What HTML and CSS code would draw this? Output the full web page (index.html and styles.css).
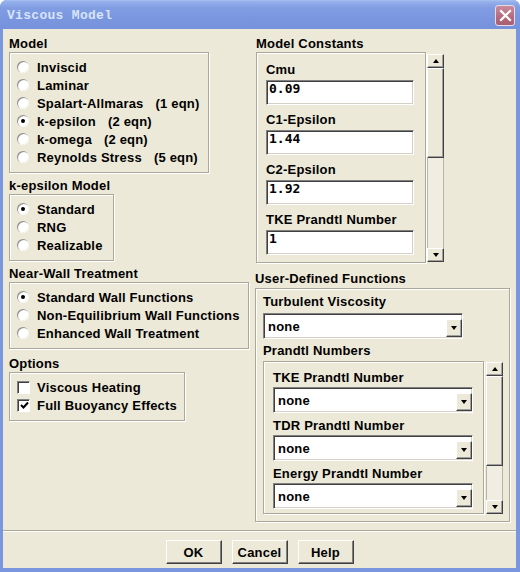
FILE: index.html
```html
<!DOCTYPE html>
<html lang="en">
<head>
  <meta charset="UTF-8" />
  <title>Viscous Model</title>
  <link rel="stylesheet" href="styles.css">
</head>
<body>
  <div class="window">
    <div class="titlebar">
      <span class="title">Viscous Model</span>
      <button class="close-btn" aria-label="Close">
        <svg width="13" height="13" viewBox="0 0 13 13"><path d="M2 2 L11 11 M11 2 L2 11" stroke="#fff" stroke-width="2.2" stroke-linecap="square"/></svg>
      </button>
    </div>

    <div class="client">
      <div class="panes">
        <!-- left column: model choices -->
        <div class="col col-left">
          <div class="group">
            <div class="group-label">Model</div>
            <div class="frame radio-frame w-model">
              <label class="opt"><span class="radio"></span>Inviscid</label>
              <label class="opt"><span class="radio"></span>Laminar</label>
              <label class="opt"><span class="radio"></span>Spalart-Allmaras<span class="eqn">(1 eqn)</span></label>
              <label class="opt"><span class="radio on"></span>k-epsilon<span class="eqn">(2 eqn)</span></label>
              <label class="opt"><span class="radio"></span>k-omega<span class="eqn">(2 eqn)</span></label>
              <label class="opt"><span class="radio"></span>Reynolds Stress<span class="eqn">(5 eqn)</span></label>
            </div>
          </div>

          <div class="group">
            <div class="group-label">k-epsilon Model</div>
            <div class="frame radio-frame w-keps">
              <label class="opt"><span class="radio on"></span>Standard</label>
              <label class="opt"><span class="radio"></span>RNG</label>
              <label class="opt"><span class="radio"></span>Realizable</label>
            </div>
          </div>

          <div class="group">
            <div class="group-label">Near-Wall Treatment</div>
            <div class="frame radio-frame w-wall">
              <label class="opt"><span class="radio on"></span>Standard Wall Functions</label>
              <label class="opt"><span class="radio"></span>Non-Equilibrium Wall Functions</label>
              <label class="opt"><span class="radio"></span>Enhanced Wall Treatment</label>
            </div>
          </div>

          <div class="group options">
            <div class="group-label">Options</div>
            <div class="frame radio-frame w-opts">
              <label class="opt"><span class="check"></span>Viscous Heating</label>
              <label class="opt"><span class="check">
                <svg width="9" height="9" viewBox="0 0 9 9"><path d="M1 4 L3.5 6.5 L8 1.5" fill="none" stroke="#000" stroke-width="2"/></svg>
              </span>Full Buoyancy Effects</label>
            </div>
          </div>
        </div>

        <!-- right column: constants and UDFs -->
        <div class="col col-right">
          <div class="group consts">
            <div class="group-label">Model Constants</div>
            <div class="scroll-row">
              <div class="frame const-frame">
                <div class="field"><div class="field-label">Cmu</div><div class="entry">0.09</div></div>
                <div class="field"><div class="field-label">C1-Epsilon</div><div class="entry">1.44</div></div>
                <div class="field"><div class="field-label">C2-Epsilon</div><div class="entry">1.92</div></div>
                <div class="field"><div class="field-label">TKE Prandtl Number</div><div class="entry">1</div></div>
              </div>
              <div class="scrollbar consts-bar">
                <span class="sb-btn up"></span>
                <span class="sb-thumb"></span>
                <span class="sb-track"></span>
                <span class="sb-btn down"></span>
              </div>
            </div>
          </div>

          <div class="group udf">
            <div class="group-label">User-Defined Functions</div>
            <div class="frame udf-frame">
              <div class="field-label">Turbulent Viscosity</div>
              <div class="combo first-combo"><span class="combo-text">none</span><span class="combo-btn"></span></div>

              <div class="field-label prandtl-label">Prandtl Numbers</div>
              <div class="scroll-row prandtl-row">
                <div class="frame prandtl-frame">
                  <div class="field"><div class="field-label">TKE Prandtl Number</div><div class="combo"><span class="combo-text">none</span><span class="combo-btn"></span></div></div>
                  <div class="field"><div class="field-label">TDR Prandtl Number</div><div class="combo"><span class="combo-text">none</span><span class="combo-btn"></span></div></div>
                  <div class="field"><div class="field-label">Energy Prandtl Number</div><div class="combo"><span class="combo-text">none</span><span class="combo-btn"></span></div></div>
                </div>
                <div class="scrollbar prandtl-bar">
                  <span class="sb-btn up"></span>
                  <span class="sb-thumb"></span>
                  <span class="sb-track"></span>
                  <span class="sb-btn down"></span>
                </div>
              </div>
            </div>
          </div>
        </div>
      </div>

      <div class="sep"></div>

      <div class="actions">
        <button class="btn">OK</button>
        <button class="btn">Cancel</button>
        <button class="btn">Help</button>
      </div>
    </div>
  </div>
</body>
</html>
```

FILE: styles.css
```css
:root {
  --face: #ece9d8;
  --etch: #aca899;
  --frame-blue: #7a96df;
  --title-text: #d8e4f8;
}
* { margin:0; padding:0; box-sizing:border-box; }
body {
  width:520px; height:572px; overflow:hidden; background:#fff;
  font: bold 13px "Liberation Sans", Arial, sans-serif; color:#000;
  letter-spacing:0.2px;
}

/* window chrome */
.window {
  width:520px; height:572px; display:flex; flex-direction:column;
  background: var(--frame-blue); border-radius:7px 7px 0 0; overflow:hidden;
}
.titlebar {
  height:29px; flex:none; display:flex; align-items:center; justify-content:space-between;
  padding:0 5px 0 7px;
  background: linear-gradient(#a9c1f0 0, #92aeea 2px, #819de2 8px, #7a96df 18px, #7592dc 100%);
}
.title { font: bold 13px "Liberation Mono", monospace; color: var(--title-text); letter-spacing:0.3px; margin-top:2px; }
.close-btn {
  width:20px; height:21px; margin-top:2px; border-radius:3px;
  border:1px solid #e8dbe6; background: linear-gradient(#c98c9c, #b46a7d 60%, #a95f72);
  display:flex; align-items:center; justify-content:center;
}

.client {
  flex:1; margin:0 4px 4px 3px; background: var(--face);
  display:flex; flex-direction:column;
}
.panes { display:flex; padding:7px 6px 0 6px; }
.col-left { width:246px; flex:none; }
.col-right { flex:1; }

.group + .group { margin-top:5px; }
.group-label, .field-label { height:16px; line-height:16px; white-space:nowrap; }

/* etched group frame */
.frame {
  border:1px solid var(--etch);
  box-shadow: inset 1px 1px 0 #fff, 1px 1px 0 #fff;
}
.radio-frame { padding:5px 0 6px 7px; }
.w-model { width:200px; }
.w-keps { width:105px; }
.w-wall { width:240px; }
.w-opts { width:176px; }
.group.options { margin-top:7px; }

.opt { display:flex; align-items:center; height:18px; white-space:nowrap; }
.eqn { margin-left:12px; }
.radio {
  width:12px; height:12px; border-radius:50%; margin-right:8px; flex:none; position:relative;
  background: radial-gradient(circle at 60% 60%, #fff 45%, #f1efe6 100%);
  box-shadow: inset 1px 1px 0 #8e8e8e, inset -1px -1px 0 #f7f6f0;
}
.radio.on::after {
  content:''; position:absolute; left:4px; top:4px; width:4px; height:4px;
  border-radius:50%; background:#000;
}
.check {
  width:13px; height:13px; margin-right:7px; flex:none; background:#fff;
  border:1px solid; border-color:#808080 #fff #fff #808080;
  box-shadow: inset 1px 1px 0 #404040;
  display:flex; align-items:center; justify-content:center;
}
.check svg { margin:1px 0 0 1px; }

/* right column */
.consts { margin-left:1px; }
.scroll-row { display:flex; align-items:flex-start; }
.const-frame { width:170px; height:211px; padding:9px 0 0 9px; overflow:hidden; }
.field-label + .entry { margin-top:2px; }
.entry {
  width:148px; height:25px; margin-bottom:7px; background:#fff;
  border:1px solid; border-color:#808080 #fff #fff #808080;
  box-shadow: inset 1px 1px 0 #404040, inset -1px -1px 0 #d4d0c8;
  padding:0 0 0 2px; line-height:22px; letter-spacing:0;
  font: bold 13px "DejaVu Sans Mono", monospace;
}

/* scrollbars */
.scrollbar {
  width:17px; display:flex; flex-direction:column; flex:none;
  border-left:1px solid #b8b5a6; border-right:1px solid #b8b5a6; background:#f0eee3;
}
.consts-bar { margin:2px 0 0 1px; height:208px; }
.prandtl-bar { margin:1px 0 0 2px; height:152px; }
.sb-btn, .sb-thumb {
  flex:none; background: var(--face);
  border:1px solid; border-color:#fff #404040 #404040 #fff;
  box-shadow: inset -1px -1px 0 #a0a0a0;
  display:flex; align-items:center; justify-content:center;
  margin:0 -1px;
}
.sb-btn { height:14px; }
.sb-btn::after { content:''; border-left:3.5px solid transparent; border-right:3.5px solid transparent; }
.sb-btn.up::after { border-bottom:4px solid #000; }
.sb-btn.down::after { border-top:4px solid #000; }
.sb-thumb { height:90px; }
.sb-track { flex:1; }

.group.udf { margin-top:8px; }
.udf-frame { margin-top:1px; padding:5px 0 7px 7px; }
.combo {
  width:200px; height:26px; background:#fff; display:flex; align-items:center;
  border:1px solid; border-color:#808080 #fff #fff #808080;
  box-shadow: inset 1px 1px 0 #404040, inset -1px -1px 0 #d4d0c8;
}
.first-combo { margin-top:3px; }
.combo-text { flex:1; padding-left:4px; padding-top:1px; }
.combo-btn {
  width:16px; height:18px; align-self:flex-end; margin:0 0 1px 0; background: var(--face);
  border:1px solid; border-color:#fff #404040 #404040 #fff;
  box-shadow: inset -1px -1px 0 #a0a0a0;
  display:flex; align-items:center; justify-content:center;
}
.combo-btn::after {
  content:''; border-left:3.5px solid transparent; border-right:3.5px solid transparent;
  border-top:4px solid #000;
}
.prandtl-label { margin-top:4px; }
.prandtl-row { margin-top:2px; }
.prandtl-frame { width:221px; height:153px; padding:8px 0 0 9px; overflow:hidden; }
.prandtl-frame .field-label + .combo { margin-top:1px; }
.prandtl-frame .combo { margin-bottom:5px; }

/* dialog buttons */
.sep { height:2px; margin-top:8px; border-top:1px solid var(--etch); border-bottom:1px solid #fff; }
.actions { display:flex; justify-content:center; gap:10px; margin-top:8px; }
.btn {
  width:56px; height:24px; background: var(--face);
  font: bold 13px "Liberation Sans", Arial, sans-serif; color:#000; letter-spacing:0.2px;
  border:1px solid; border-color:#fff #404040 #404040 #fff;
  box-shadow: inset -1px -1px 0 #808080;
}
```
